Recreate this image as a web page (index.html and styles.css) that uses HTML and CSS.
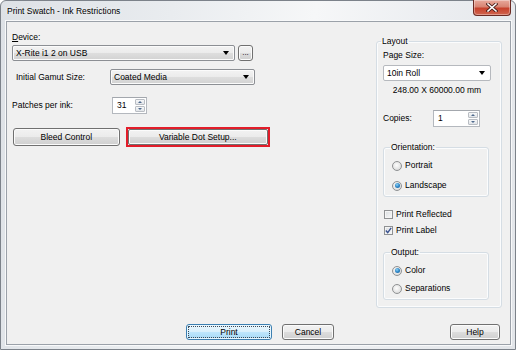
FILE: index.html
```html
<!DOCTYPE html>
<html lang="en">
<head>
    <meta charset="UTF-8">
    <title>Print Swatch - Ink Restrictions</title>
    <link rel="stylesheet" href="styles.css">
</head>
<body>
<div class="window">
    <div class="titlebar">
        <span class="title">Print Swatch - Ink Restrictions</span>
        <span class="close">
            <svg width="12" height="9" viewBox="0 0 12 9">
                <path d="M2 1 L10 8 M10 1 L2 8" stroke="#4a1d18" stroke-width="3.2" stroke-linecap="square"/>
                <path d="M2 1 L10 8 M10 1 L2 8" stroke="#ffffff" stroke-width="1.6" stroke-linecap="square"/>
            </svg>
        </span>
    </div>
    <div class="client">
        <div class="main">
            <div class="left">
                <div class="lbl device-lbl"><u>D</u>evice:</div>
                <div class="row device-row">
                    <div class="combo combo-btn device-combo"><span>X-Rite i1 2 on USB</span><i class="arrow"></i></div>
                    <button class="btn dots" type="button">...</button>
                </div>
                <div class="row gamut-row">
                    <span class="lbl gamut-lbl">Initial Gamut Size:</span>
                    <div class="combo combo-btn gamut-combo"><span>Coated Media</span><i class="arrow"></i></div>
                </div>
                <div class="row patches-row">
                    <span class="lbl patches-lbl">Patches per ink:</span>
                    <div class="spin patches-spin">
                        <span class="spin-val">31</span>
                        <span class="spin-btns"><i class="spin-up"></i><i class="spin-down"></i></span>
                    </div>
                </div>
                <div class="row buttons-row">
                    <button class="btn bleed" type="button">Bleed Control</button>
                    <div class="highlight">
                        <button class="btn variable" type="button">Variable Dot Setup...</button>
                    </div>
                </div>
            </div>

            <fieldset class="group layout">
                <legend>Layout</legend>
                <div class="lbl page-lbl">Page Size:</div>
                <div class="combo combo-white page-combo"><span>10in Roll</span><i class="arrow"></i></div>
                <div class="dims">248.00 X 60000.00 mm</div>
                <div class="row copies-row">
                    <span class="lbl copies-lbl">Copies:</span>
                    <div class="spin copies-spin">
                        <span class="spin-val">1</span>
                        <span class="spin-btns"><i class="spin-up"></i><i class="spin-down"></i></span>
                    </div>
                </div>

                <fieldset class="group sub orientation">
                    <legend>Orientation:</legend>
                    <div class="option first"><i class="radio"></i>Portrait</div>
                    <div class="option"><i class="radio on"></i>Landscape</div>
                </fieldset>

                <div class="check-row first"><i class="check"></i>Print Reflected</div>
                <div class="check-row">
                    <i class="check">
                        <svg width="7" height="7" viewBox="0 0 7 7"><path d="M0.8 3.6 L2.7 5.6 L6.2 0.8" fill="none" stroke="#3a5290" stroke-width="1.4"/></svg>
                    </i>Print Label
                </div>

                <fieldset class="group sub output">
                    <legend>Output:</legend>
                    <div class="option first"><i class="radio on"></i>Color</div>
                    <div class="option"><i class="radio"></i>Separations</div>
                </fieldset>
            </fieldset>
        </div>
        <div class="footer">
            <button class="btn print" type="button"><span class="focus">Print</span></button>
            <button class="btn cancel" type="button">Cancel</button>
            <button class="btn help" type="button">Help</button>
        </div>
    </div>
</div>
</body>
</html>
```

FILE: styles.css
```css
* {
    box-sizing: border-box;
}
body {
    margin: 0;
    width: 516px;
    height: 350px;
    overflow: hidden;
    font-family: "Liberation Sans", Arial, sans-serif;
    font-size: 8.5px;
    line-height: 11px;
    color: #000;
}
.window {
    width: 516px;
    height: 350px;
    border: 1px solid #7c828a;
    border-radius: 6px 6px 0 0;
    background: linear-gradient(100deg, #dde1e6 0%, #e9ecef 30%, #f6f7f8 55%, #eceef1 75%, #e2e5e9 100%);
    padding: 0 4px 4px 5px;
    display: flex;
    flex-direction: column;
}
.titlebar {
    height: 20px;
    display: flex;
    justify-content: space-between;
    align-items: flex-start;
}
.title {
    margin-top: 5px;
    padding-left: 1px;
    font-size: 8.5px;
    text-shadow: 0 0 4px #fff;
}
.close {
    width: 38px;
    height: 16px;
    margin-top: -1px;
    border: 1px solid #6b2a23;
    border-top: none;
    border-radius: 0 0 4px 4px;
    background: linear-gradient(#e8a99c 0%, #d88473 45%, #c7412c 55%, #d0654f 100%);
    box-shadow: inset 0 0 0 1px rgba(255, 255, 255, 0.35);
    display: flex;
    align-items: center;
    justify-content: center;
}
.client {
    flex: 1;
    border: 1px solid #9ba1a9;
    box-shadow: 0 0 0 1px #f8f9fa;
    background: #f0f0f0;
    display: flex;
    flex-direction: column;
}
.main {
    flex: 1;
    display: flex;
    justify-content: space-between;
    padding: 0 8px 0 5px;
}

/* left column */
.left {
    width: 258px;
    padding-top: 10px;
}
.row {
    display: flex;
    align-items: center;
}
.device-row {
    margin-top: 2px;
}
.gamut-row {
    margin-top: 8px;
}
.patches-row {
    margin-top: 12px;
}
.buttons-row {
    margin-top: 13px;
    align-items: flex-start;
}
.gamut-lbl {
    margin-left: 4px;
    width: 94px;
}
.patches-lbl {
    width: 100px;
}
.combo {
    height: 16px;
    display: flex;
    align-items: center;
    justify-content: space-between;
    padding: 0 5px 0 3px;
    border-radius: 2px;
}
.combo-btn {
    border: 1px solid #8c8f94;
    background: linear-gradient(#f3f3f3 0%, #ebebeb 50%, #dedede 50%, #d2d2d2 100%);
    box-shadow: inset 0 0 0 1px #fbfbfb;
}
.combo-white {
    border: 1px solid #b6b9be;
    background: #fff;
}
.arrow {
    width: 0;
    height: 0;
    border-left: 3.5px solid transparent;
    border-right: 3.5px solid transparent;
    border-top: 4px solid #000;
}
.device-combo {
    width: 223px;
}
.gamut-combo {
    width: 145px;
}
.btn {
    font: inherit;
    color: #000;
    padding: 0;
    border: 1px solid #707070;
    border-radius: 3px;
    background: linear-gradient(#f2f2f2 0%, #ebebeb 50%, #dddddd 50%, #cfcfcf 100%);
    box-shadow: inset 0 0 0 1px #fbfbfb;
}
.dots {
    width: 15px;
    height: 16px;
    margin-left: 3px;
    line-height: 8px;
    font-size: 8px;
}
.spin {
    height: 17px;
    display: flex;
    align-items: center;
    justify-content: space-between;
    border: 1px solid #b4b8be;
    border-top-color: #a3a7ad;
    background: #fff;
    padding: 0 1px 0 4px;
}
.patches-spin {
    width: 35px;
}
.spin-btns {
    display: flex;
    flex-direction: column;
    gap: 1px;
}
.spin-up,
.spin-down {
    width: 10px;
    height: 6px;
    border: 1px solid #b9bdc3;
    border-radius: 1px;
    background: linear-gradient(#f6f7f8, #e2e5e9);
    display: flex;
    justify-content: center;
    align-items: center;
}
.spin-up::after,
.spin-down::after {
    content: "";
    border-left: 2px solid transparent;
    border-right: 2px solid transparent;
}
.spin-up::after {
    border-bottom: 2px solid #4f6a8d;
}
.spin-down::after {
    border-top: 2px solid #4f6a8d;
}
.bleed {
    width: 107px;
    height: 18px;
    margin: 1px 0 0 1px;
}
.highlight {
    margin-left: 6px;
    width: 145px;
    height: 20px;
    border: 2px solid #e21d2a;
}
.variable {
    width: 100%;
    height: 100%;
    border-radius: 2px;
}

/* group boxes */
.group {
    margin: 0;
    border: 1px solid #d5dde4;
    border-radius: 3px;
    box-shadow: inset 0 0 0 1px #fbfcfd;
    min-width: 0;
}
.group legend {
    padding: 0 1px;
}
.layout {
    width: 126px;
    margin-top: 14px;
    height: 272px;
    padding: 0 0 0 6px;
}
.layout legend {
    margin-left: -2px;
}
.page-lbl {
    margin-top: 3px;
}
.page-combo {
    margin-top: 4px;
    width: 108px;
}
.dims {
    margin-top: 4px;
    width: 108px;
    text-align: center;
}
.copies-row {
    margin-top: 14px;
}
.copies-lbl {
    width: 50px;
}
.copies-spin {
    width: 47px;
}
.sub {
    width: 106px;
    padding: 0 0 5px 8px;
}
.sub legend {
    margin-left: -2px;
}
.orientation {
    margin-top: 15px;
}
.output {
    margin-top: 11px;
}
.option {
    display: flex;
    align-items: center;
    margin-top: 9px;
}
.option.first {
    margin-top: 7px;
}
.output .option {
    margin-top: 7px;
}
.radio {
    width: 10px;
    height: 10px;
    margin-right: 3px;
    border-radius: 50%;
    border: 1px solid #8f9193;
    background: radial-gradient(circle at 45% 40%, #fdfdfd 0%, #e8e8e8 50%, #cfcfcf 100%);
    display: flex;
    align-items: center;
    justify-content: center;
}
.radio.on::after {
    content: "";
    width: 5px;
    height: 5px;
    border-radius: 50%;
    background: radial-gradient(circle at 40% 35%, #8fd3f7 0%, #2e86c6 50%, #155a99 100%);
}
.check-row {
    display: flex;
    align-items: center;
    margin-top: 5px;
    margin-left: 1px;
}
.check-row.first {
    margin-top: 12px;
}
.check {
    width: 9px;
    height: 9px;
    margin-right: 3px;
    border: 1px solid #8f9193;
    background: linear-gradient(135deg, #d9dcdf, #f9fafa);
    box-shadow: inset 0 0 0 1px #f4f4f4;
    display: flex;
    align-items: center;
    justify-content: center;
}

/* bottom buttons */
.footer {
    display: flex;
    padding: 0 10px 4px 179px;
}
.footer .btn {
    height: 16px;
}
.print {
    width: 86px;
    border-color: #3c7fb1;
    background: linear-gradient(#eaf6fd 0%, #d9f0fc 50%, #bee6fd 50%, #a7d9f5 100%);
    box-shadow: inset 0 0 0 1px #e9f7fe;
    padding: 2px;
}
.focus {
    display: block;
    height: 100%;
    line-height: 10px;
    outline: 1px dotted #3a4a5a;
}
.cancel {
    width: 52px;
    margin-left: 10px;
}
.help {
    width: 50px;
    margin-left: auto;
}
```
